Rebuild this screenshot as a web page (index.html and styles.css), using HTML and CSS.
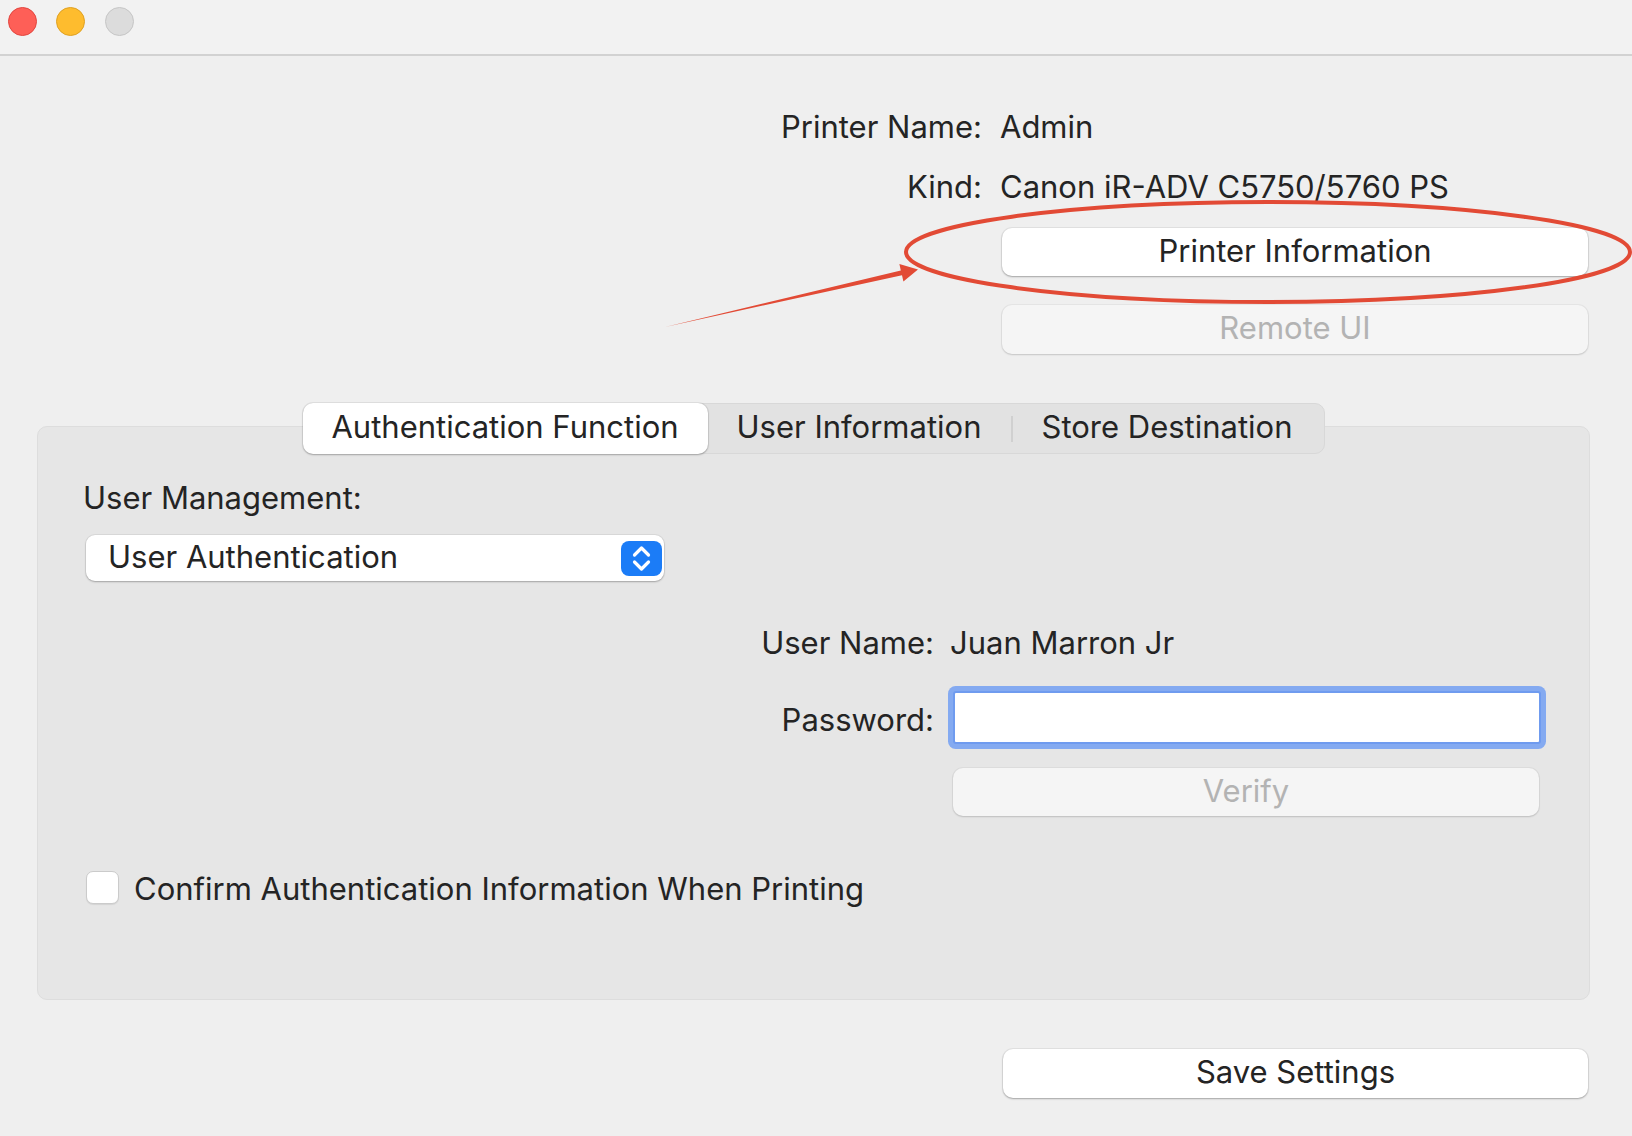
FILE: index.html
```html
<!DOCTYPE html>
<html lang="en">
<head>
<meta charset="utf-8">
<title>Printer Settings</title>
<link rel="stylesheet" href="styles.css">
</head>
<body>
<div class="window">
  <header class="titlebar">
    <span class="light light-close"></span>
    <span class="light light-min"></span>
    <span class="light light-zoom"></span>
  </header>
  <main class="content">
    <section class="info">
      <div class="info-label">Printer Name:</div>
      <div class="info-value">Admin</div>
      <div class="info-label row-kind">Kind:</div>
      <div class="info-value row-kind">Canon iR-ADV C5750/5760 PS</div>
      <div class="spacer"></div>
      <button class="btn btn-white btn-info">Printer Information</button>
      <div class="spacer"></div>
      <button class="btn btn-disabled btn-remote">Remote UI</button>
    </section>

    <section class="tabwrap">
      <div class="tabs">
        <div class="seg seg-auth selected">Authentication Function</div>
        <div class="seg seg-user">User Information</div>
        <div class="seg seg-store">Store Destination</div>
      </div>
      <div class="panel">
        <div class="field-label">User Management:</div>
        <div class="select">
          <span class="select-text">User Authentication</span>
          <svg class="stepper" width="41" height="35" viewBox="0 0 41 35">
            <rect x="0" y="0" width="41" height="35" rx="8" fill="#1b7cf7"/>
            <path d="M13.5 14 L20.5 7 L27.5 14" fill="none" stroke="#fff" stroke-width="3.2" stroke-linecap="round" stroke-linejoin="round"/>
            <path d="M13.5 21 L20.5 28 L27.5 21" fill="none" stroke="#fff" stroke-width="3.2" stroke-linecap="round" stroke-linejoin="round"/>
          </svg>
        </div>
        <div class="form">
          <div class="form-label">User Name:</div>
          <div class="form-value">Juan Marron Jr</div>
          <div class="form-label row-pass pass-label">Password:</div>
          <div class="password row-pass"></div>
          <div class="spacer"></div>
          <button class="btn btn-disabled btn-verify">Verify</button>
        </div>
        <label class="check-row">
          <span class="checkbox"></span>
          <span class="check-text">Confirm Authentication Information When Printing</span>
        </label>
      </div>
    </section>

    <div class="footer">
      <button class="btn btn-white btn-save">Save Settings</button>
    </div>
  </main>

  <svg class="annotation" width="1632" height="1136" viewBox="0 0 1632 1136">
    <ellipse cx="1268" cy="252" rx="362" ry="50" fill="none" stroke="#e24a35" stroke-width="4"/>
    <polygon points="665,327 900.8,270.4 899.4,264 918,269.5 903.4,281.6 902,275.2" fill="#e24a35"/>
  </svg>
</div>
</body>
</html>
```

FILE: styles.css
```css
* { box-sizing: border-box; }

html, body {
  margin: 0;
  padding: 0;
}

body {
  background: #efefef;
  font-family: Inter, "Noto Sans", "DejaVu Sans", sans-serif;
  font-size: 31px;
  color: #242424;
  width: 1632px;
  height: 1136px;
  overflow: hidden;
}

.window {
  position: relative;
  width: 1632px;
  height: 1136px;
}

.titlebar {
  height: 56px;
  background: #f2f2f2;
  border-bottom: 2px solid #d2d2d2;
  display: flex;
  align-items: flex-start;
  gap: 19.5px;
  padding: 6.5px 0 0 7.5px;
}

.light {
  width: 29px;
  height: 29px;
  border-radius: 50%;
  display: block;
}
.light-close { background: #fe5f57; border: 1px solid #e2463f; }
.light-min { background: #febc2e; border: 1px solid #dfa123; }
.light-zoom { background: #dcdcdc; border: 1px solid #c6c6c6; }

.content {
  display: flex;
  flex-direction: column;
}

/* top info block */
.info {
  display: grid;
  grid-template-columns: 982px 586px;
  column-gap: 18px;
  padding-top: 51px;
}

.info-label {
  text-align: right;
  line-height: 40px;
  white-space: nowrap;
}
.info-value {
  line-height: 40px;
  white-space: nowrap;
}
.row-kind { margin-top: 20px; }

.btn {
  font-family: inherit;
  font-size: 31px;
  border: none;
  border-radius: 10px;
  padding: 0 0 4px 0;
  margin: 0;
  text-align: center;
  display: block;
}
.btn-white {
  background: #ffffff;
  color: #242424;
  box-shadow: 0 1px 2px rgba(0,0,0,0.28), 0 0 0 1px rgba(0,0,0,0.05);
}
.btn-disabled {
  background: #f5f5f5;
  color: #b3b3b3;
  box-shadow: 0 1px 2px rgba(0,0,0,0.14), 0 0 0 1px rgba(0,0,0,0.04);
}

.btn-info {
  margin: 21px 0 0 2px;
  height: 48px;
  width: 586px;
}
.btn-remote {
  margin: 29px 0 0 2px;
  height: 49px;
  width: 586px;
}

/* tabs + panel */
.tabwrap {
  margin: 49px 42px 0 37px;
  display: flex;
  flex-direction: column;
  align-items: center;
}

.tabs {
  position: relative;
  z-index: 1;
  display: flex;
  width: 1022px;
  height: 51px;
  background: #e2e2e2;
  border: 1px solid #d8d8d8;
  border-radius: 10px;
}

.seg {
  display: flex;
  align-items: center;
  justify-content: center;
  white-space: nowrap;
  height: 100%;
  padding-bottom: 4px;
  position: relative;
}
.seg-auth { width: 405px; margin: -1px 0 -1px -1px; height: 51px; }
.seg-user { width: 303px; }
.seg-store { flex: 1; }
.seg-store::before {
  content: "";
  position: absolute;
  left: 0;
  top: 12px;
  bottom: 11px;
  width: 2px;
  background: #d0d0d0;
}
.selected {
  background: #ffffff;
  border-radius: 10px;
  box-shadow: 0 1px 2px rgba(0,0,0,0.25), 0 0 0 1px rgba(0,0,0,0.06);
}

.panel {
  align-self: stretch;
  margin-top: -28px;
  background: #e6e6e6;
  border: 1px solid #dddddd;
  border-radius: 10px;
  padding: 51px 0 95px 45px;
  display: flex;
  flex-direction: column;
  align-items: flex-start;
}

.field-label {
  line-height: 40px;
}

.select {
  margin: 17px 0 0 3px;
  width: 578px;
  height: 46px;
  background: #ffffff;
  border-radius: 9px;
  box-shadow: 0 1px 2px rgba(0,0,0,0.26), 0 0 0 1px rgba(0,0,0,0.05);
  display: flex;
  align-items: center;
  justify-content: space-between;
  padding: 0 2px 0 22px;
}
.select-text { white-space: nowrap; padding-bottom: 3px; }
.stepper { display: block; }

.form {
  margin-top: 42px;
  display: grid;
  grid-template-columns: 851px 592px;
  column-gap: 16px;
  align-items: center;
}
.form-label {
  text-align: right;
  line-height: 40px;
  white-space: nowrap;
}
.form-value {
  line-height: 40px;
  white-space: nowrap;
}
.row-pass { margin-top: 28px; }
.pass-label { padding-top: 5px; }

.password {
  margin-left: 3px;
  width: 588px;
  height: 53px;
  background: #ffffff;
  border: 2px solid #6f9bef;
  border-radius: 3px;
  box-shadow: 0 0 0 5px #84aaf1;
}

.btn-verify {
  margin: 24px 0 0 3px;
  width: 586px;
  height: 48px;
}

.check-row {
  margin: 55px 0 0 3px;
  display: flex;
  align-items: center;
  gap: 15px;
  height: 33px;
}
.checkbox {
  width: 33px;
  height: 33px;
  background: #ffffff;
  border: 1px solid #cbcbcb;
  border-radius: 7px;
  box-shadow: 0 1px 1px rgba(0,0,0,0.08);
  display: block;
}
.check-text { white-space: nowrap; padding-top: 2px; }

.footer {
  display: flex;
  justify-content: flex-end;
  padding-right: 44px;
  margin-top: 49px;
}
.btn-save {
  width: 585px;
  height: 49px;
}

.annotation {
  position: absolute;
  left: 0;
  top: 0;
  pointer-events: none;
}
```
